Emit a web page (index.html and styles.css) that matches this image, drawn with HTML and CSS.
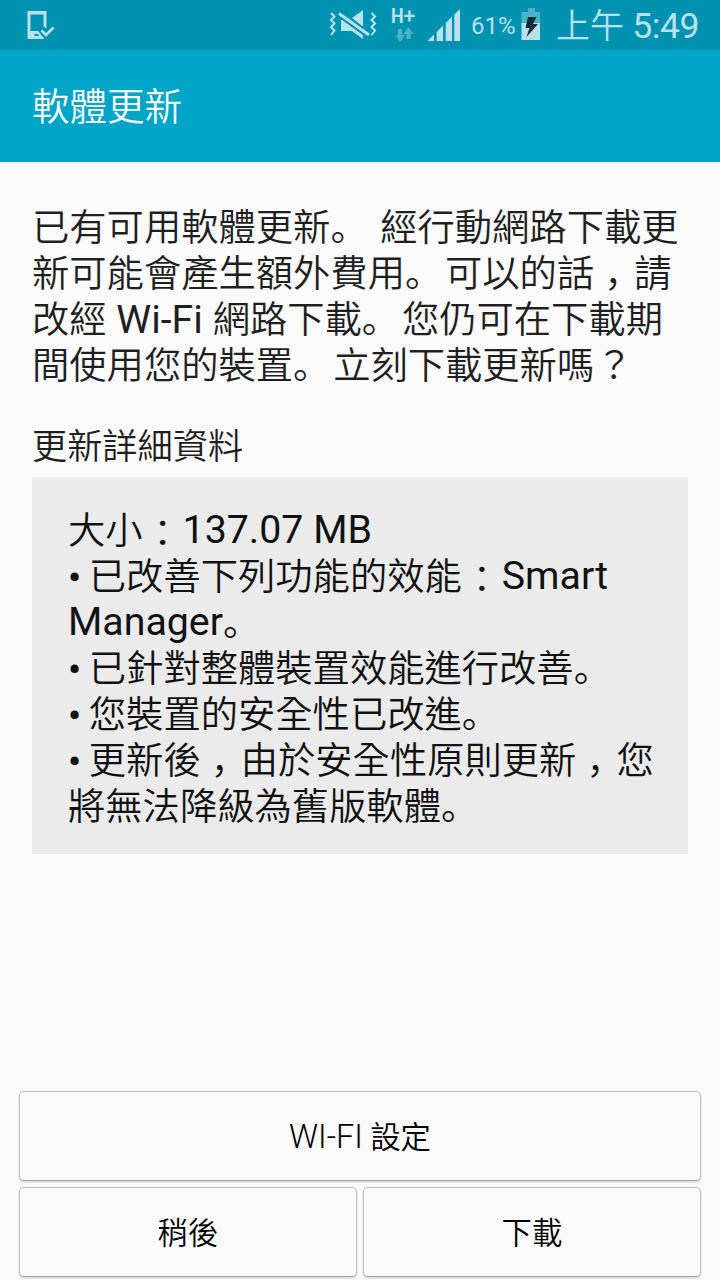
FILE: index.html
```html
<!DOCTYPE html>
<html lang="zh-Hant">
<head>
<meta charset="utf-8">
<title>軟體更新</title>
<link rel="stylesheet" href="styles.css">
</head>
<body>
<header class="status">
  <svg class="status-icons" viewBox="0 0 540 50" width="540" height="50">
    <g fill="#b9e1e9">
      <path fill-rule="evenodd" d="M27.5 11H46.5V28.5L43.5 26.5V14.5H30.5V31H38L44.5 39H27.5ZM34.5 34V36H38.5V34Z"/>
      <path d="M352 18L363 10V27ZM341 20H343L363 35V39L352 31H341Z"/>
      <path d="M427.5 41L434 34.5V41ZM436.7 41V32L443 25.5V41ZM445.7 41V23L452 16.5V41ZM454.3 41V14.5L460 9V41Z"/>
      <path d="M521.5 23H541.5V40H521.5Z"/>
    </g>
    <path d="M41.5 30.5L46 35L53.5 27.5" fill="none" stroke="#b9e1e9" stroke-width="2.8"/>
    <path d="M339 13.5L369 35" stroke="#0092b0" stroke-width="7"/>
    <path d="M339 13.5L369 35" stroke="#b9e1e9" stroke-width="2.8"/>
    <path d="M331 13L334.5 16.5L331 20L334.5 23.5L331 27L334.5 30.5L331 35M371.5 13L375 16.5L371.5 20L375 23.5L371.5 27L375 30.5L371.5 35" fill="none" stroke="#b9e1e9" stroke-width="2"/>
    <path d="M528 8H535V12H541.5V23H521.5V12H528ZM398 29H402V35H405L400 42L395.5 35H398ZM403.5 34L408.5 27L413.5 34H410.5V39H406.5V34Z" fill="#4db3c8"/>
    <path d="M528 17H536.5L533 24H538L526.5 37L529.5 28H525.5Z" fill="#102d38"/>
  </svg>
  <span class="network"><span class="hspa">H</span><span class="plus">+</span></span>
  <span class="battery">61%</span>
  <span class="clock"><span class="meridiem">上午</span> 5:49</span>
</header>
<div class="appbar"><h1>軟體更新</h1></div>
<main>
  <p class="message">已有可用軟體更新<span class="stop" lang="ja">。</span><span class="latin">&nbsp; </span>經行動網路下載更<br>新可能會產生額外費用<span class="stop" lang="ja">。</span><span class="latin"> </span>可以的話<span class="comma" lang="ko">，</span>請<br>改經<span class="latin"> Wi-Fi </span>網路下載<span class="stop" lang="ja">。</span><span class="latin"> </span>您仍可在下載期<br>間使用您的裝置<span class="stop" lang="ja">。</span><span class="latin"> </span>立刻下載更新嗎<span class="mark">？</span></p>
  <h2>更新詳細資料</h2>
  <section class="details">大小<span class="mark colon" lang="ja">：</span><span class="latin">137.07 MB</span><br><span class="bullet">• </span>已改善下列功能的效能<span class="mark colon" lang="ja">：</span><span class="latin">Smart</span><br><span class="latin">Manager</span><span class="stop" lang="ja">。</span><br><span class="bullet">• </span>已針對整體裝置效能進行改善<span class="stop" lang="ja">。</span><br><span class="bullet">• </span>您裝置的安全性已改進<span class="stop" lang="ja">。</span><br><span class="bullet">• </span>更新後<span class="comma" lang="ko">，</span>由於安全性原則更新<span class="comma" lang="ko">，</span>您<br>將無法降級為舊版軟體<span class="stop" lang="ja">。</span></section>
</main>
<footer class="actions">
  <button class="wide"><span class="caption">WI-FI</span> 設定</button>
  <button>稍後</button>
  <button>下載</button>
</footer>
</body>
</html>
```
FILE: styles.css
```css
* { box-sizing: border-box; }
body { margin: 0; width: 720px; height: 1280px; display: flex; flex-direction: column; background: #fafafa; color: #1f1f1f; font-family: Roboto, "Noto Sans CJK TC", sans-serif; overflow: hidden; }
.status { position: relative; height: 50px; background: #0092b0; color: #b9e1e9; white-space: nowrap; }
.status-icons { display: block; }
.network, .battery, .clock { position: absolute; }
.network { left: 391px; top: 5px; font-size: 21px; line-height: 22px; font-weight: 700; display: flex; }
.hspa { width: 12.5px; transform: scaleX(.85); transform-origin: left; }
.plus { font-weight: 500; }
.battery { left: 471px; top: 11px; font-size: 24px; line-height: 30px; }
.clock { left: 556px; top: 4px; font-size: 35.6px; line-height: 44px; letter-spacing: -0.5px; font-weight: 370; }
.meridiem { font-size: 34px; letter-spacing: 0; font-weight: 350; }
.appbar { height: 112px; background: #00a5c7; padding: 2px 32px 0; display: flex; align-items: center; color: #fafafa; }
h1 { margin: 0; font-size: 37.5px; line-height: 46px; font-weight: 350; }
main { flex: 1; padding: 43px 32px 0; }
.message, .details { font-size: 37.3px; line-height: 46px; font-weight: 350; white-space: nowrap; }
.message { margin: 0; }
.latin { font-size: 39.3px; line-height: 40px; font-weight: 380; white-space: pre-wrap; }
.details .latin { vertical-align: 1px; }
.stop, .mark, .comma { font-family: "Noto Sans CJK JP", sans-serif; line-height: 40px; }
.stop { letter-spacing: -7px; }
.mark { display: inline-block; width: 40px; text-align: center; }
.colon { vertical-align: -3px; line-height: 34px; }
.comma { display: inline-block; width: 40px; padding-left: 10px; letter-spacing: -8px; font-family: "Noto Sans CJK KR", sans-serif; }
.bullet { margin-right: -1.5px; font-weight: 500; }
h2 { margin: 35px 0 7px; font-size: 35.2px; line-height: 46px; font-weight: 350; }
.details { height: 377px; padding: 31px 36px 0; background: #ebebeb; color: #111; }
.actions { height: 189px; padding: 0 19px; display: grid; grid-template-columns: 1fr 1fr; grid-template-rows: 90px 90px; gap: 6px; }
button { padding: 4px 0 0; border: 1px solid #bdbdbd; border-bottom-color: #a8a8a8; border-radius: 5px; box-shadow: 0 1px 2px #0003; background: #fafafa; color: #000; font: 350 30.4px/40px Roboto, "Noto Sans CJK TC", sans-serif; }
.caption { font-size: 32.4px; }
.wide { grid-column: 1 / 3; padding-top: 2px; }
```
